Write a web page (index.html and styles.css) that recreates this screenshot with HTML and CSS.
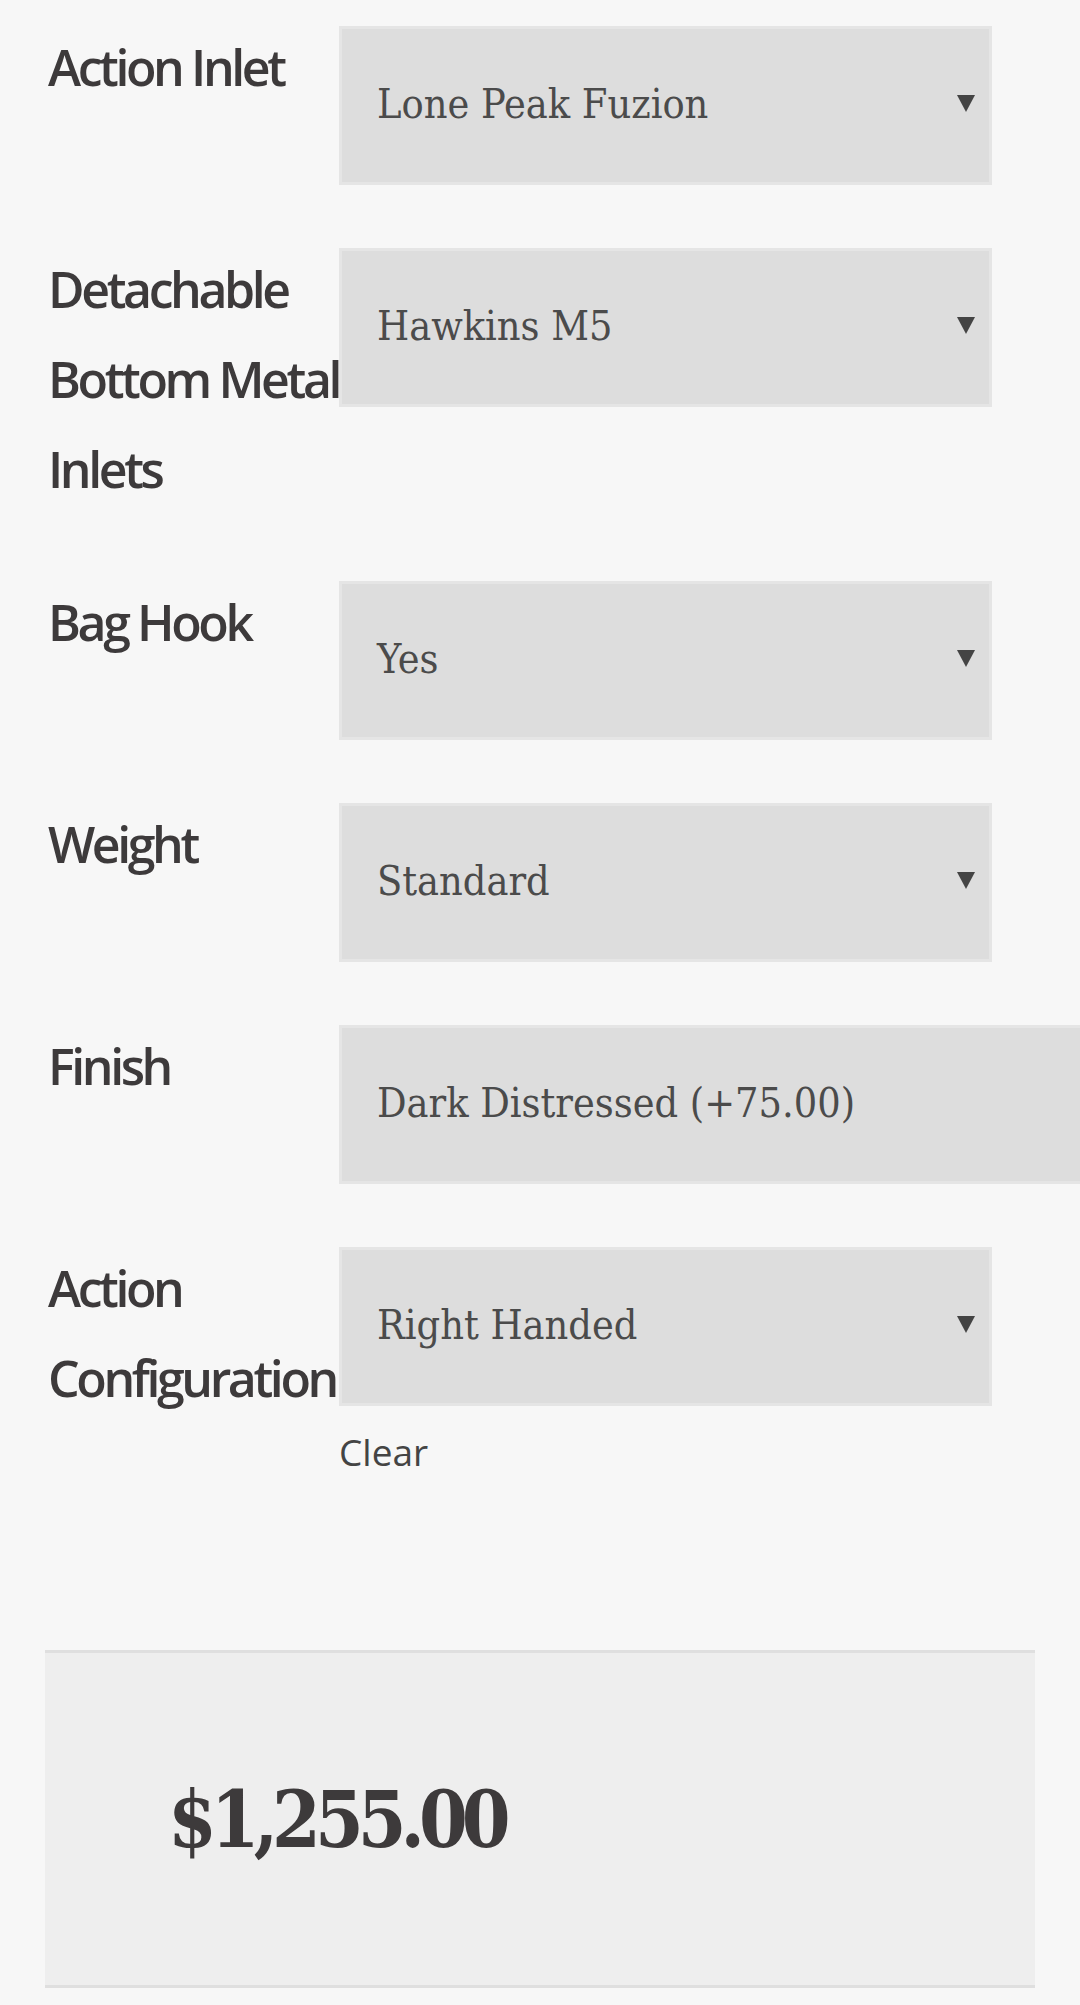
FILE: index.html
```html
<!DOCTYPE html>
<html lang="en">

<head>
    <meta charset="UTF-8" />
    <title>Stock Options</title>
    <meta name="viewport" content="width=device-width, initial-scale=1.0" />
    <link rel="stylesheet" href="styles.css">
</head>

<body>
    <form class="variations-form">
        <div class="variations">
            <div class="variation-row">
                <label class="variation-label">Action Inlet</label>
                <div class="variation-value">
                    <div class="select-box">
                        <span class="select-text">Lone Peak Fuzion</span>
                        <span class="select-arrow"></span>
                    </div>
                </div>
            </div>

            <div class="variation-row">
                <label class="variation-label">Detachable Bottom Metal Inlets</label>
                <div class="variation-value">
                    <div class="select-box">
                        <span class="select-text">Hawkins M5</span>
                        <span class="select-arrow"></span>
                    </div>
                </div>
            </div>

            <div class="variation-row">
                <label class="variation-label">Bag Hook</label>
                <div class="variation-value">
                    <div class="select-box">
                        <span class="select-text">Yes</span>
                        <span class="select-arrow"></span>
                    </div>
                </div>
            </div>

            <div class="variation-row">
                <label class="variation-label">Weight</label>
                <div class="variation-value">
                    <div class="select-box">
                        <span class="select-text">Standard</span>
                        <span class="select-arrow"></span>
                    </div>
                </div>
            </div>

            <div class="variation-row">
                <label class="variation-label">Finish</label>
                <div class="variation-value">
                    <div class="select-box select-wide">
                        <span class="select-text">Dark Distressed (+75.00)</span>
                    </div>
                </div>
            </div>

            <div class="variation-row">
                <label class="variation-label">Action Configuration</label>
                <div class="variation-value">
                    <div class="select-box">
                        <span class="select-text">Right Handed</span>
                        <span class="select-arrow"></span>
                    </div>
                    <a class="reset-link" href="#">Clear</a>
                </div>
            </div>
        </div>

        <div class="price-box">
            <span class="price">$1,255.00</span>
        </div>
    </form>
</body>

</html>
```

FILE: styles.css
```css
body {
    margin: 0;
    background-color: #f7f7f7;
    color: #3d3a3b;
    font-family: 'Open Sans', sans-serif;
    overflow-x: hidden;
}

.variations-form {
    padding: 22px 45px 0;
}

.variation-row {
    display: flex;
    align-items: flex-start;
    margin-bottom: 59px;
}

.variation-row:last-child {
    margin-bottom: 0;
}

/* label text runs right up to the select, so let it spill a little */
.variation-label {
    flex: 0 0 312px;
    min-width: 0;
    margin-right: -18px;
    box-sizing: border-box;
    padding: 0 0 4px 3px;
    font-size: 50px;
    font-weight: 600;
    letter-spacing: -3.4px;
    line-height: 90px;
}

.variation-value {
    flex: 0 0 auto;
    margin-top: 4px;
}

/* fake select, grey block with a small triangle */
.select-box {
    display: flex;
    align-items: center;
    justify-content: space-between;
    box-sizing: border-box;
    width: 653px;
    height: 159px;
    padding: 0 14px 4px 35px;
    background: #dddddd;
    border: 3px solid #e5e5e5;
    font-family: 'DejaVu Serif Condensed', 'DejaVu Serif', serif;
    font-stretch: condensed;
    font-size: 41px;
    color: #4b4b4b;
    white-space: nowrap;
}

.select-wide {
    width: 780px;
}

.select-arrow {
    width: 0;
    height: 0;
    border-left: 9px solid transparent;
    border-right: 9px solid transparent;
    border-top: 17px solid #444;
}

.reset-link {
    display: block;
    margin-top: 20px;
    font-size: 37px;
    color: #444;
    text-decoration: none;
}

.price-box {
    display: flex;
    align-items: center;
    height: 332px;
    margin-top: 173px;
    padding: 0 123px;
    background: #eeeeee;
    border-top: 3px solid #dfdfdf;
    border-bottom: 3px solid #dfdfdf;
}

.price {
    font-family: 'DejaVu Serif Condensed', 'DejaVu Serif', serif;
    font-stretch: condensed;
    font-size: 78px;
    font-weight: 700;
    letter-spacing: -6px;
    color: #3d3a3b;
}
```
